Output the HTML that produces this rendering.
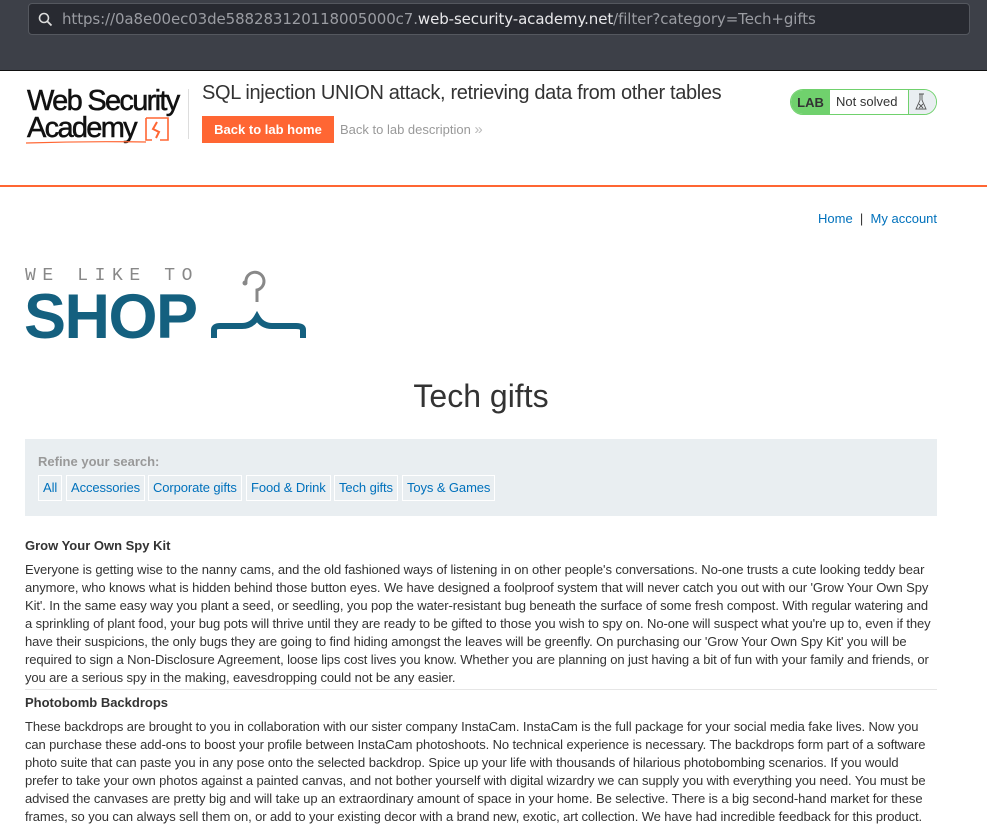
<!DOCTYPE html>
<html><head><meta charset="utf-8"><style>
*{margin:0;padding:0;box-sizing:border-box}
body{width:987px;height:820px;overflow:hidden;background:#fff;font-family:"Liberation Sans",sans-serif;position:relative}
.chrome{position:absolute;left:0;top:0;width:987px;height:71px;background:#3d4048;border-bottom:1px solid #111}
.url{position:absolute;left:28px;top:3px;width:942px;height:32px;background:#282a31;border:1px solid #55585f;border-radius:4px;font-size:15px;color:#9a9ca2;line-height:30px;padding-left:33px;font-family:"DejaVu Sans","Liberation Sans",sans-serif;letter-spacing:-0.1px}
.url b{font-weight:normal;color:#e8e8ea}
.abs{position:absolute;white-space:nowrap}
.orange{position:absolute;left:0;top:185px;width:987px;height:2px;background:#ff6633}
a{color:#0071bc;text-decoration:none}
.cats{position:absolute;left:25px;top:439px;width:912px;height:77px;background:#e9eef1}
.cat{position:absolute;top:475px;height:26px;border:1px solid #fff;font-size:13px;line-height:24px;padding:0 4px;color:#0071bc;letter-spacing:-0.1px}
.p{position:absolute;left:25px;font-size:13px;color:#333;line-height:18px;white-space:nowrap;letter-spacing:-0.1px}
h3{position:absolute;left:25px;font-size:13px;color:#333;font-weight:bold;white-space:nowrap}
</style></head><body>
<div class="chrome"><div class="url"><svg style="position:absolute;left:9px;top:8px" width="15" height="15" viewBox="0 0 15 15"><circle cx="6" cy="6" r="4.5" fill="none" stroke="#ddd" stroke-width="1.6"/><path d="M9.5 9.5L13.5 13.5" stroke="#ddd" stroke-width="1.8"/></svg>https://0a8e00ec03de588283120118005000c7.<b>web-security-academy.net</b>/filter?category=Tech+gifts</div></div>

<div class="abs" style="left:27px;top:86px;font-size:29px;letter-spacing:-1.7px;line-height:30px;color:#111;-webkit-text-stroke:0.5px #111">Web Security</div>
<div class="abs" style="left:27px;top:113px;font-size:29px;letter-spacing:-1.7px;line-height:30px;color:#111;-webkit-text-stroke:0.5px #111">Academy</div>
<svg class="abs" style="left:26px;top:116px" width="146" height="30" viewBox="0 0 146 30"><path d="M120 2h22v22h-8M120 2v22h6" fill="none" stroke="#ff6633" stroke-width="1.6"/><path d="M131 6l-4 7 6 3-3 6" fill="none" stroke="#ff6633" stroke-width="2"/><path d="M0 27Q60 25 120 26" stroke="#ff6633" stroke-width="1.2" fill="none"/></svg>
<div style="position:absolute;left:188px;top:89px;width:1px;height:50px;background:#ddd"></div>
<div class="abs" style="left:202px;top:82px;font-size:20px;letter-spacing:-0.35px;color:#333">SQL injection UNION attack, retrieving data from other tables</div>
<div class="abs" style="left:202px;top:116px;width:132px;height:27px;background:#ff6633;color:#fff;font-weight:bold;font-size:13px;line-height:27px;text-align:center">Back to lab home</div>
<div class="abs" style="left:340px;top:121px;font-size:13px;color:#999">Back to lab description <span style="color:#bbb;font-size:15px">&#187;</span></div>
<div class="abs" style="left:790px;top:89px;width:147px;height:26px;border:1px solid #70d16d;border-radius:13px;overflow:hidden;background:#fff">
<div style="position:absolute;left:0;top:0;width:39px;height:24px;background:#70d16d;font-weight:bold;font-size:13px;line-height:25px;text-align:center;color:#333">LAB</div>
<div style="position:absolute;left:45px;top:0;font-size:13px;line-height:24px;color:#333">Not solved</div>
<div style="position:absolute;left:117px;top:0;width:30px;height:24px;background:#e9eef1;border-left:1px solid #70d16d"><svg width="29" height="24" viewBox="0 0 29 24"><path d="M10 4h5M11 4v6l-4 9h10l-4-9V4" fill="none" stroke="#555" stroke-width="0.9"/><path d="M10 14l4 4M14 14l-4 4" stroke="#555" stroke-width="0.9"/></svg></div></div>
<div class="orange"></div>

<div class="abs" style="left:818px;top:211px;font-size:13px"><a>Home</a> <span style="color:#333">&nbsp;|&nbsp;</span> <a>My account</a></div>

<div class="abs" style="left:25px;top:266px;font-family:'Liberation Mono',monospace;font-size:18px;letter-spacing:6.6px;color:#888">WE LIKE TO</div>
<div class="abs" style="left:24px;top:281px;font-weight:bold;font-size:63px;color:#14607f;letter-spacing:-1.5px">SHOP</div>
<svg class="abs" style="left:210px;top:266px" width="98" height="76" viewBox="0 0 98 76"><path d="M36 16a9 9 0 1 1 11 8v12" fill="none" stroke="#888" stroke-width="3"/><circle cx="35" cy="17" r="2.5" fill="#888"/><path d="M4 72v-8q0-4 6-4h22q10 0 15-9 5 9 15 9h24q7 0 7 4v8" fill="none" stroke="#14607f" stroke-width="6"/></svg>

<div class="abs" style="left:0;width:962px;text-align:center;top:378px;font-size:32px;color:#333">Tech gifts</div>

<div class="cats"></div>
<div class="abs" style="left:38px;top:454px;font-size:13px;font-weight:bold;color:#999">Refine your search:</div>
<div class="cat" style="left:38px">All</div>
<div class="cat" style="left:66px">Accessories</div>
<div class="cat" style="left:148px">Corporate gifts</div>
<div class="cat" style="left:246px">Food &amp; Drink</div>
<div class="cat" style="left:334px">Tech gifts</div>
<div class="cat" style="left:402px">Toys &amp; Games</div>

<h3 style="top:538px">Grow Your Own Spy Kit</h3>
<div class="p" style="top:561px">Everyone is getting wise to the nanny cams, and the old fashioned ways of listening in on other people's conversations. No-one trusts a cute looking teddy bear<br>anymore, who knows what is hidden behind those button eyes. We have designed a foolproof system that will never catch you out with our 'Grow Your Own Spy<br>Kit'. In the same easy way you plant a seed, or seedling, you pop the water-resistant bug beneath the surface of some fresh compost. With regular watering and<br>a sprinkling of plant food, your bug pots will thrive until they are ready to be gifted to those you wish to spy on. No-one will suspect what you're up to, even if they<br>have their suspicions, the only bugs they are going to find hiding amongst the leaves will be greenfly. On purchasing our 'Grow Your Own Spy Kit' you will be<br>required to sign a Non-Disclosure Agreement, loose lips cost lives you know. Whether you are planning on just having a bit of fun with your family and friends, or<br>you are a serious spy in the making, eavesdropping could not be any easier.</div>
<div style="position:absolute;left:25px;top:689px;width:912px;height:1px;background:#e6e6e6"></div>
<h3 style="top:695px">Photobomb Backdrops</h3>
<div class="p" style="top:718px">These backdrops are brought to you in collaboration with our sister company InstaCam. InstaCam is the full package for your social media fake lives. Now you<br>can purchase these add-ons to boost your profile between InstaCam photoshoots. No technical experience is necessary. The backdrops form part of a software<br>photo suite that can paste you in any pose onto the selected backdrop. Spice up your life with thousands of hilarious photobombing scenarios. If you would<br>prefer to take your own photos against a painted canvas, and not bother yourself with digital wizardry we can supply you with everything you need. You must be<br>advised the canvases are pretty big and will take up an extraordinary amount of space in your home. Be selective. There is a big second-hand market for these<br>frames, so you can always sell them on, or add to your existing decor with a brand new, exotic, art collection. We have had incredible feedback for this product.</div>
</body></html>
